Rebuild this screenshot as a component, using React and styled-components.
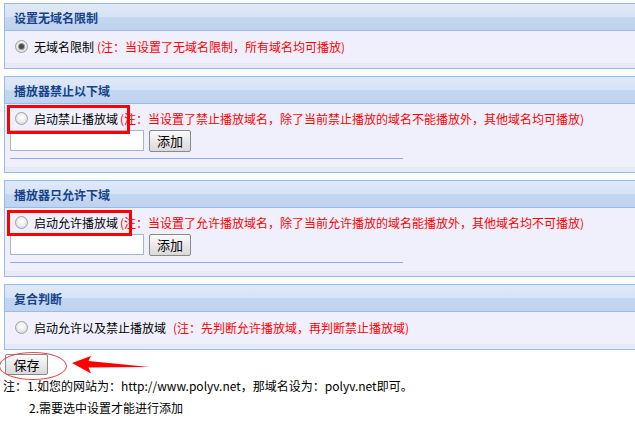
import React from "react";
import styled, { createGlobalStyle } from "styled-components";

const Global = createGlobalStyle`
  html, body { margin: 0; padding: 0; background: #fff; }
  body {
    overflow: hidden;
    font-family: SimSun, "Noto Sans CJK SC", "DejaVu Sans", sans-serif;
    font-size: 12px;
    color: #000;
  }
  * { box-sizing: border-box; }
`;

const Page = styled.div`
  width: 635px;
  padding-top: 3px;
`;

const Panel = styled.section`
  margin: 0 -20px ${(p) => p.$mb ?? 7}px 4px;
  border: 1px solid #99bbe8;
  border-right: none;
`;

const Header = styled.div`
  height: 27px;
  padding-left: 9px;
  display: flex;
  align-items: center;
  font-weight: bold;
  font-size: 12px;
  color: #15428b;
  border-bottom: 1px solid #99bbe8;
  background: linear-gradient(#e0e9f7 0%, #d6e3f5 48%, #c4d7f1 52%, #bfd3ef 100%);
`;

const Body = styled.div`
  background: #f0f0fd;
  padding: ${(p) => p.$pt ?? 5}px 0 0 5px;
  border-bottom: 5px solid #e6e9f6;
`;

const Row = styled.div`
  position: relative;
  height: 20px;
  display: flex;
  align-items: center;
  margin-bottom: ${(p) => p.$mb ?? 0}px;
  white-space: nowrap;
`;

const Radio = styled.span`
  width: 13px;
  height: 13px;
  margin: 0 6px 0 5px;
  border-radius: 50%;
  border: 1px solid #a0a0a0;
  background: radial-gradient(circle at 50% 40%, #ffffff 0%, #eeeeee 45%, #cfcfcf 100%);
  display: flex;
  align-items: center;
  justify-content: center;
  flex: none;
  &::after {
    content: "";
    display: ${(p) => (p.$checked ? "block" : "none")};
    width: 5px;
    height: 5px;
    border-radius: 50%;
    background: #4a4a4a;
    box-shadow: 0 0 0 1px #9a9a9a;
  }
`;

const Label = styled.span`
  color: #000;
`;

const Note = styled.span`
  color: #ff0000;
  margin-left: ${(p) => p.$ml ?? 3}px;
`;

const Highlight = styled.span`
  position: absolute;
  left: -3px;
  top: ${(p) => p.$top}px;
  width: ${(p) => p.$w}px;
  height: ${(p) => p.$h}px;
  border: 3px solid #ff0000;
  pointer-events: none;
`;

const InputRow = styled.div`
  display: flex;
  align-items: center;
  margin-top: 2px;
  height: 21px;
`;

const TextInput = styled.input`
  width: 134px;
  height: 21px;
  margin: 0;
  padding: 0 3px;
  border: 1px solid #a7b7c9;
  background: #fff;
  font: inherit;
`;

const Btn = styled.button`
  height: ${(p) => p.$h ?? 22}px;
  width: ${(p) => p.$w}px;
  margin: 0 0 0 ${(p) => p.$ml ?? 0}px;
  padding: 0;
  border: 1px solid #8a8a8a;
  border-radius: 2px;
  background: linear-gradient(#fbfbfb, #e6e6e6 60%, #d9d9d9);
  font-family: SimSun, "Noto Sans CJK SC", sans-serif;
  font-size: 13px;
  color: #000;
`;

const Divider = styled.div`
  width: 393px;
  height: 1px;
  background: #8fa7ef;
  margin: 7px 0 8px;
`;

const SaveArea = styled.div`
  position: relative;
  height: 25px;
  padding: 4px 0 0 5px;
`;

const Ellipse = styled.span`
  position: absolute;
  left: -1px;
  top: 2px;
  width: 68px;
  height: 28px;
  border: 1px solid #e84a4a;
  border-radius: 50%;
  pointer-events: none;
`;

const Arrow = styled.svg`
  position: absolute;
  left: 72px;
  top: 5px;
`;

const Notes = styled.div`
  padding-left: 3px;
  line-height: 22px;
`;

const NoteLine = styled.div`
  padding-left: ${(p) => p.$indent ?? 0}px;
  white-space: nowrap;
`;

function DomainPanel({ title, label, note, hl }) {
  return (
    <Panel>
      <Header>{title}</Header>
      <Body $pt={4}>
        <Row>
          <Radio />
          <Label>{label}</Label>
          <Note $ml={2}>{note}</Note>
          <Highlight $top={hl.top} $w={hl.w} $h={hl.h} />
        </Row>
        <InputRow>
          <TextInput type="text" />
          <Btn $w={42} $ml={5}>添加</Btn>
        </InputRow>
        <Divider />
      </Body>
    </Panel>
  );
}

export default function App() {
  return (
    <Page>
      <Global />
      <Panel>
        <Header>设置无域名限制</Header>
        <Body>
          <Row $mb={7}>
            <Radio $checked />
            <Label>无域名限制</Label>
            <Note>(注：当设置了无域名限制，所有域名均可播放)</Note>
          </Row>
        </Body>
      </Panel>

      <DomainPanel
        title="播放器禁止以下域"
        label="启动禁止播放域"
        note="(注：当设置了禁止播放域名，除了当前禁止播放的域名不能播放外，其他域名均可播放)"
        hl={{ top: -3, w: 123, h: 29 }}
      />

      <DomainPanel
        title="播放器只允许下域"
        label="启动允许播放域"
        note="(注：当设置了允许播放域名，除了当前允许播放的域名能播放外，其他域名均不可播放)"
        hl={{ top: -2, w: 125, h: 26 }}
      />

      <Panel $mb={0}>
        <Header>复合判断</Header>
        <Body>
          <Row $mb={7}>
            <Radio />
            <Label>启动允许以及禁止播放域</Label>
            <Note $ml={7}>(注：先判断允许播放域，再判断禁止播放域)</Note>
          </Row>
        </Body>
      </Panel>

      <SaveArea>
        <Btn $w={43} $h={21}>保存</Btn>
        <Ellipse />
        <Arrow width="80" height="20" viewBox="0 0 80 20">
          <path d="M0 8 L19 1 L16.5 6 L77 12 L16.5 12.5 L19 18.5 Z" fill="#ff0000" />
        </Arrow>
      </SaveArea>

      <Notes>
        <NoteLine>注：1.如您的网站为：http://www.polyv.net，那域名设为：polyv.net即可。</NoteLine>
        <NoteLine $indent={26}>2.需要选中设置才能进行添加</NoteLine>
      </Notes>
    </Page>
  );
}
